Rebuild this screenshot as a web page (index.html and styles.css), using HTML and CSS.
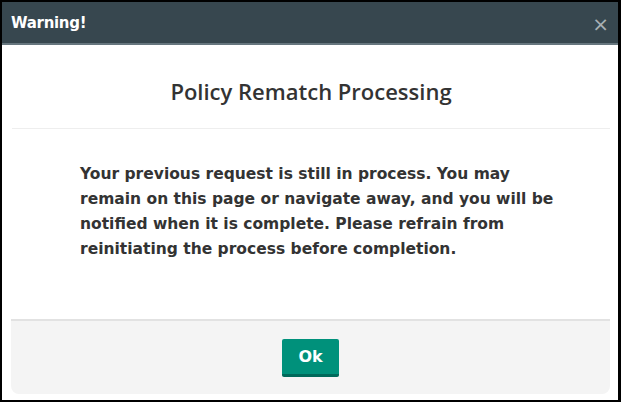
FILE: index.html
```html
<!DOCTYPE html>
<html lang="en">
<head>
    <meta charset="UTF-8">
    <meta name="viewport" content="width=device-width, initial-scale=1.0">
    <title>Warning</title>
    <link rel="stylesheet" href="styles.css">
</head>
<body>
    <div class="modal">
        <div class="modal-header">
            <span class="modal-title">Warning!</span>
            <button class="close-button">&times;</button>
        </div>
        <div class="modal-body">
            <h2 class="body-title">Policy Rematch Processing</h2>
            <p class="message">
                Your previous request is still in process. You may remain on this page or navigate away, and you will be notified when it is complete. Please refrain from reinitiating the process before completion.
            </p>
        </div>
        <div class="modal-footer">
            <button class="ok-button">Ok</button>
        </div>
    </div>
</body>
</html>
```

FILE: styles.css
```css
body {
    margin: 0;
    padding: 0;
    background-color: #000;
    font-family: "DejaVu Sans", Verdana, sans-serif;
}
.modal {
    margin: 2px 3px 2px 2px;
    height: 398px;
    background-color: #fff;
    display: flex;
    flex-direction: column;
}
.modal-header {
    background-color: #37474f;
    border-bottom: 2px solid #66767e;
    height: 41px;
    padding: 0 9px 0 9px;
    display: flex;
    justify-content: space-between;
    align-items: center;
}
.modal-title {
    color: #fff;
    font-size: 15px;
    font-weight: bold;
    letter-spacing: -0.3px;
}
.close-button {
    background: none;
    border: none;
    color: #a9b0b4;
    font-family: "DejaVu Sans", sans-serif;
    font-size: 20px;
    padding: 0;
    margin-top: 3px;
    cursor: pointer;
}
.modal-body {
    flex: 1;
    margin: 0 8px 0 10px;
}
.body-title {
    font-family: "Open Sans", sans-serif;
    font-weight: 600;
    font-size: 22px;
    line-height: 27px;
    color: #333;
    text-align: center;
    margin: 0;
    padding: 33px 0 23px 0;
    border-bottom: 1px solid #eee;
}
.message {
    font-size: 15.5px;
    font-weight: bold;
    line-height: 25px;
    color: #333;
    margin: 33px 0 0 0;
    padding: 0 48px 0 68px;
}
.modal-footer {
    background-color: #f4f4f4;
    border-top: 2px solid #e2e2e2;
    margin: 0 8px 6px 9px;
    height: 73px;
    border-radius: 0 0 8px 8px;
    display: flex;
    justify-content: center;
    align-items: center;
}
.ok-button {
    background-color: #00917b;
    border: none;
    border-bottom: 3px solid #00695a;
    color: #fff;
    font-family: "DejaVu Sans", Verdana, sans-serif;
    font-weight: bold;
    font-size: 16px;
    width: 57px;
    height: 38px;
    border-radius: 2px;
    margin-top: 1px;
    cursor: pointer;
}
```
